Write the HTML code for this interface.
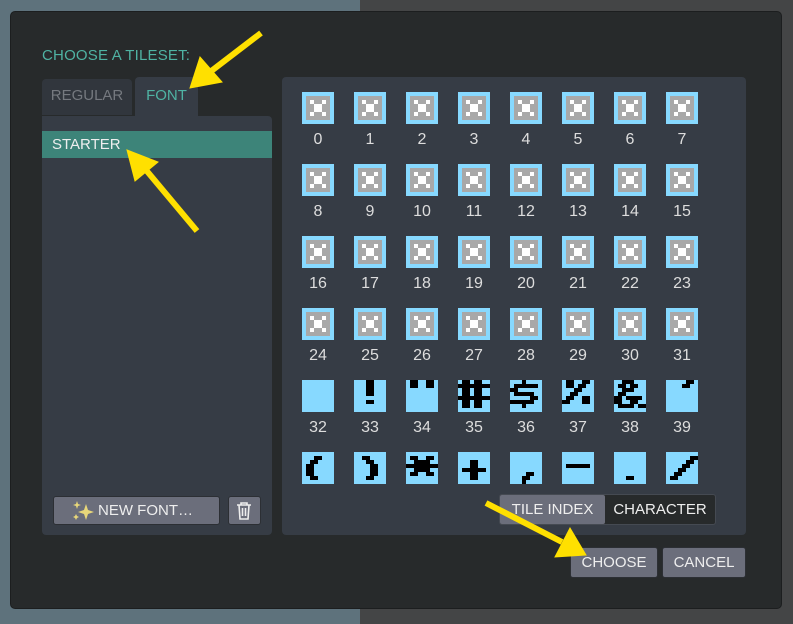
<!DOCTYPE html>
<html><head><meta charset="utf-8"><style>
*{margin:0;padding:0;box-sizing:border-box}
body{width:793px;height:624px;overflow:hidden;position:relative;font-family:"Liberation Sans","DejaVu Sans",sans-serif;background:#444546}
.bgl{position:absolute;left:0;top:0;width:360px;height:624px;background:#5e727c}
.dlg{position:absolute;left:10px;top:11px;width:772px;height:598px;background:#272a2b;border-radius:5px;border:1px solid #1c1e1f}
.abs{position:absolute}
.title{left:42px;top:47px;color:#4fb3a3;font-size:15px;letter-spacing:.2px}
.tab{background:#363c45;font-size:15px;text-align:center}
.btn{background:#6b6e7b;border-radius:3px;color:#eee;font-size:15px;text-align:center;border:1px solid #2c2f34}
.tile{position:absolute;width:32px;height:32px}
.lbl{position:absolute;width:52px;text-align:center;color:#ddd;font-size:16px}
</style></head><body>
<div class="bgl"></div>
<div class="dlg"></div>
<div class="abs title">CHOOSE A TILESET:</div>
<div class="abs tab" style="left:42px;top:79px;width:90px;height:36px;line-height:34px;color:#75797f;border-radius:4px 4px 0 0;background:#31363d">REGULAR</div>
<div class="abs tab" style="left:135px;top:77px;width:63px;height:40px;line-height:38px;color:#4fb3a3;border-radius:4px 4px 0 0">FONT</div>
<div class="abs" style="left:42px;top:116px;width:230px;height:419px;background:#363c45;border-radius:0 4px 4px 4px"></div>
<div class="abs" style="left:42px;top:131px;width:230px;height:27px;background:#3d8479;color:#eee;font-size:15px;line-height:27px;padding-left:10px">STARTER</div>
<div class="abs btn" style="left:53px;top:496px;width:167px;height:29px;line-height:27px;padding-left:18px">NEW FONT…</div>
<svg class="abs" style="left:72px;top:500px" width="24" height="22" viewBox="0 0 24 22"><path d="M14 4 L16 10 L22 12 L16 14 L14 20 L12 14 L6 12 L12 10Z" fill="#e8d77a"/><path d="M5 1 L6 4 L9 5 L6 6 L5 9 L4 6 L1 5 L4 4Z" fill="#e8d77a"/><path d="M4 14 L5 16 L7 17 L5 18 L4 20 L3 18 L1 17 L3 16Z" fill="#e8d77a"/></svg>
<div class="abs btn" style="left:228px;top:496px;width:33px;height:29px"></div>
<svg class="abs" style="left:235px;top:501px" width="18" height="20" viewBox="0 0 18 20"><g fill="none" stroke="#eee" stroke-width="1.6"><path d="M2 4 H16 M6 4 V2 H12 V4 M4 4 L5 18 H13 L14 4 M7.5 7 V15 M10.5 7 V15"/></g></svg>
<div class="abs" style="left:282px;top:77px;width:464px;height:458px;background:#363c45;border-radius:4px;overflow:hidden">
<div id="grid" class="abs" style="left:0;top:0;width:464px;height:407px;overflow:hidden"></div>
</div>
<div class="abs" style="left:499px;top:494px;width:217px;height:31px;background:#272a2b;border:1px solid #454a52;border-radius:3px"></div>
<div class="abs" style="left:500px;top:495px;width:105px;height:29px;background:#6b6e7b;border-radius:2px;color:#eee;font-size:15px;line-height:29px;text-align:center">TILE INDEX</div>
<div class="abs" style="left:605px;top:495px;width:110px;height:29px;color:#eee;font-size:15px;line-height:29px;text-align:center">CHARACTER</div>
<div class="abs btn" style="left:570px;top:547px;width:88px;height:31px;line-height:29px">CHOOSE</div>
<div class="abs btn" style="left:662px;top:547px;width:84px;height:31px;line-height:29px">CANCEL</div>
<svg class="abs" style="left:0;top:0" width="793" height="624">
<g fill="#ffe000" stroke="#ffe000">
<line x1="261" y1="33" x2="210" y2="72" stroke-width="6"/>
<polygon points="190,88 200,57 222,82" stroke-width="1"/>
<line x1="197" y1="231" x2="146" y2="170" stroke-width="6"/>
<polygon points="127,150 158,162 135,181" stroke-width="1"/>
<line x1="486" y1="503" x2="562" y2="542" stroke-width="6"/>
<polygon points="586,555 555,557 570,528" stroke-width="1"/>
</g></svg>
<script>
var G={
32:[],
33:["...##...","...##...","...##...","...##...","........","...##...","........"],
34:[".##..##.",".##..##."],
35:[".##.##..","########",".##.##..",".##.##..","########",".##.##..",".##.##.."],
36:["...#....",".######.","##......",".#####..",".....##.","######..","...#...."],
37:[".##..##.",".##.##..","...##...","..##....",".##..##.","##...##."],
38:["..###...",".##.##..","..###...",".##.....","##.####.","##..##..",".####.##"],
39:[".....##.","....##.."],
40:["........","...##...","..##....",".##.....",".##.....",".##.....","..##...."],
41:["........","..##....","...##...","....##..","....##..","....##..","...##..."],
42:["........",".##..##.","..####..","########","..####..",".##..##."],
43:["........","........","...##...","...##...",".######.","...##...","...##..."],
44:["........","........","........","........","........","....##..","...##...","...#...."],
45:["........","........","........",".######."],
46:["........","........","........","........","........","........","...##..."],
47:["........","......##",".....##.","....##..","...##...","..##....",".##....."]
};
var g=document.getElementById('grid'),h='';
for(var i=0;i<48;i++){
 var c=i%8,r=Math.floor(i/8),x=20+c*52,y=15+r*72;
 var s='<svg class="tile" style="left:'+x+'px;top:'+y+'px" width="32" height="32" viewBox="0 0 8 8" shape-rendering="crispEdges">';
 if(i<32){
  s+='<rect width="8" height="8" fill="#87d9ff"/><rect x="1" y="1" width="6" height="6" fill="#a8a8a8"/>';
  [[2,2],[5,2],[2,5],[5,5]].forEach(function(p){s+='<rect x="'+p[0]+'" y="'+p[1]+'" width="1" height="1" fill="#fff"/>'});
  s+='<rect x="3" y="3" width="2" height="2" fill="#fff"/>';
 } else {
  s+='<rect width="8" height="8" fill="#87d9ff"/>';
  var b=G[i];
  for(var yy=0;yy<b.length;yy++)for(var xx=0;xx<8;xx++)if(b[yy][xx]=='#')s+='<rect x="'+xx+'" y="'+yy+'" width="1" height="1" fill="#000"/>';
 }
 s+='</svg>';
 h+=s+'<div class="lbl" style="left:'+(x-10)+'px;top:'+(y+39)+'px">'+i+'</div>';
}
g.innerHTML=h;
</script>
</body></html>
